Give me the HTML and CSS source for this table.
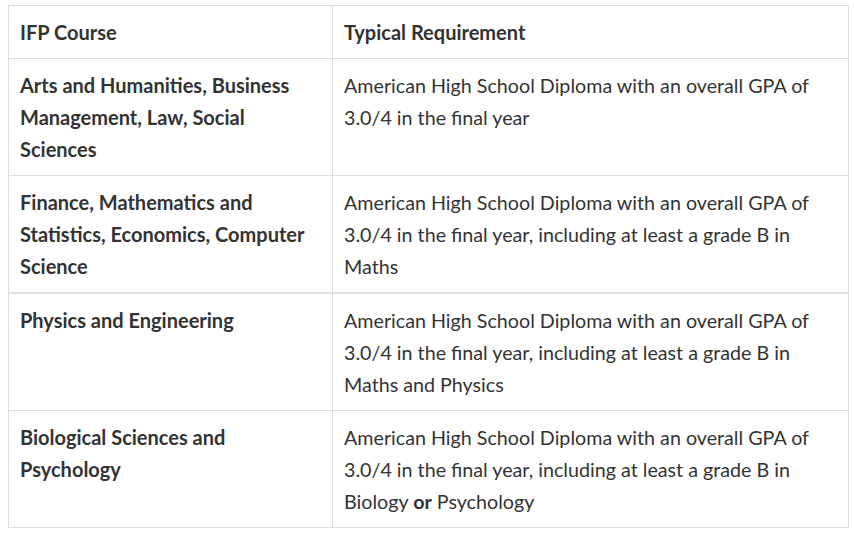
FILE: index.html
```html
<!DOCTYPE html>
<html>
<head>
<meta charset="utf-8">
<link rel="stylesheet" href="styles.css">
</head>
<body>
<table class="req-table">
  <colgroup>
    <col class="col-course">
    <col class="col-req">
  </colgroup>
  <thead>
    <tr>
      <th>IFP Course</th>
      <th>Typical Requirement</th>
    </tr>
  </thead>
  <tbody>
    <tr>
      <td class="course">Arts and Humanities, Business Management, Law, Social Sciences</td>
      <td class="req">American High School Diploma with an overall GPA of 3.0/4 in the final year</td>
    </tr>
    <tr>
      <td class="course">Finance, Mathematics and Statistics, Economics, Computer Science</td>
      <td class="req">American High School Diploma with an overall GPA of 3.0/4 in the final year, including at least a grade B in Maths</td>
    </tr>
    <tr class="thick-top">
      <td class="course">Physics and Engineering</td>
      <td class="req">American High School Diploma with an overall GPA of 3.0/4 in the final year, including at least a grade B in Maths and Physics</td>
    </tr>
    <tr>
      <td class="course">Biological Sciences and Psychology</td>
      <td class="req">American High School Diploma with an overall GPA of 3.0/4 in the final year, including at least a grade B in Biology <strong>or</strong> Psychology</td>
    </tr>
  </tbody>
</table>
</body>
</html>
```
FILE: styles.css
```css
html, body {
  margin: 0;
  padding: 0;
  background: #ffffff;
}
body {
  font-family: "Lato", "Open Sans", sans-serif;
  color: #333333;
  font-size: 19.7px;
  line-height: 32px;
}
.req-table {
  margin: 5px 0 0 8px;
  width: 840px;
  border-collapse: collapse;
  table-layout: fixed;
  border: 1px solid #dddddd;
}
.col-course { width: 324px; }
.col-req { width: 516px; }
.req-table th,
.req-table td {
  border: 1px solid #dddddd;
  padding: 10px 11px;
  text-align: left;
  vertical-align: top;
  font-weight: 400;
}
.req-table td.req {
  padding-top: 11px;
  padding-bottom: 9px;
}
.req-table th,
.req-table td.course {
  font-weight: 700;
  font-size: 20px;
}
.req-table strong {
  font-weight: 700;
}
.thick-top td {
  border-top: 2px solid #e0e0e0;
}
```
